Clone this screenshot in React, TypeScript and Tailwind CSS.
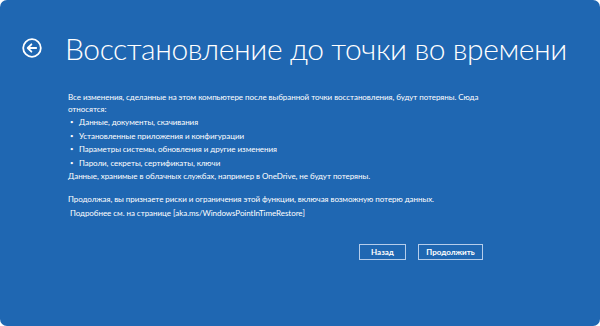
export default function App() {
  const font = { fontFamily: 'Lato, "Open Sans", sans-serif' };
  return (
    <div className="w-[600px] h-[326px] bg-white">
      <div className="w-[600px] h-[326px] bg-[#1f67b2] rounded-[7px] text-white flex flex-col" style={font}>
        <div className="flex items-center pt-[26px] pl-[22px] h-[70px]">
          <svg width="20" height="20" viewBox="0 0 20 20" className="shrink-0">
            <circle cx="10" cy="10" r="8.8" fill="none" stroke="white" strokeWidth="1.8" />
            <path d="M14.2 10H5.8M9.4 6.3L5.7 10l3.7 3.7" fill="none" stroke="white" strokeWidth="1.8" strokeLinecap="round" strokeLinejoin="round" />
          </svg>
          <h1 className="ml-[23px] text-[30px] font-light leading-none whitespace-nowrap tracking-[-0.4px]">Восстановление до точки во времени</h1>
        </div>
        <div className="pl-[68px] pt-[21px] text-[8px] leading-[12px] whitespace-nowrap tracking-[-0.05px]">
          <p>Все изменения, сделанные на этом компьютере после выбранной точки восстановления, будут потеряны. Сюда<br />относятся:</p>
          <ul className="mt-[1px] flex flex-col gap-[1.5px]">
            <li className="flex items-center"><span className="w-[11px] pl-[2px] text-[6px]">•</span>Данные, документы, скачивания</li>
            <li className="flex items-center"><span className="w-[11px] pl-[2px] text-[6px]">•</span>Установленные приложения и конфигурации</li>
            <li className="flex items-center"><span className="w-[11px] pl-[2px] text-[6px]">•</span>Параметры системы, обновления и другие изменения</li>
            <li className="flex items-center"><span className="w-[11px] pl-[2px] text-[6px]">•</span>Пароли, секреты, сертификаты, ключи</li>
          </ul>
          <p className="mt-[1px]">Данные, хранимые в облачных службах, например в OneDrive, не будут потеряны.</p>
          <p className="mt-[11px]">Продолжая, вы признаете риски и ограничения этой функции, включая возможную потерю данных.</p>
          <p className="mt-[2px] pl-[2px]">Подробнее см. на странице [aka.ms/WindowsPointInTimeRestore]</p>
        </div>
        <div className="flex justify-end gap-[12px] pr-[117px] mt-[25px]">
          <button className="w-[47px] h-[16px] border border-[#b5cdeb] text-[8px] font-bold leading-none flex items-center justify-center">Назад</button>
          <button className="w-[65px] h-[16px] border border-[#b5cdeb] text-[8px] font-bold leading-none flex items-center justify-center">Продолжить</button>
        </div>
      </div>
    </div>
  );
}
